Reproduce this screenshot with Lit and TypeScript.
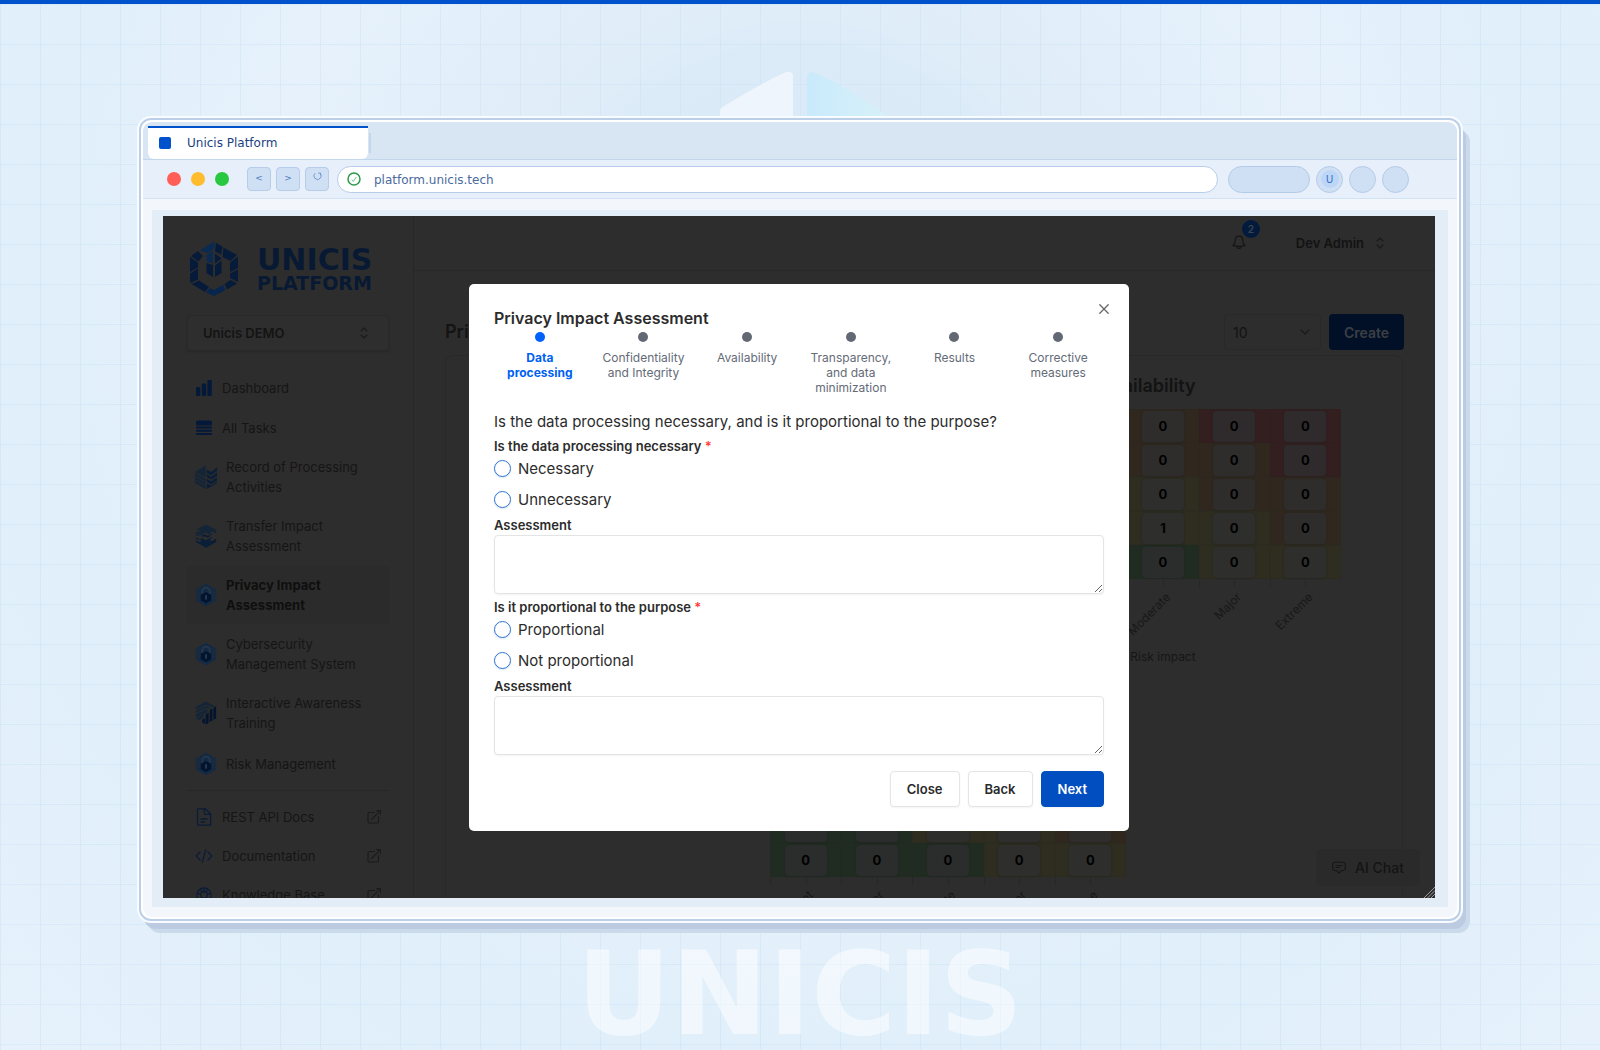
import { LitElement, html, svg, css, nothing } from "lit";
import { customElement, property } from "lit/decorators.js";
import { classMap } from "lit/directives/class-map.js";

type IconName =
  | "bars" | "stack" | "record" | "transfer" | "lock" | "training"
  | "doc" | "code" | "globe" | "external" | "updown" | "down" | "bell" | "chat" | "close" | "reload" | "check";

const icons: Record<IconName, { box: string; body: unknown }> = {
  bars: {
    box: "0 0 16 16",
    body: svg`<g fill="#04193a"><rect y="7" width="4.4" height="9" rx="1.2"/><rect x="5.8" y="3.5" width="4.4" height="12.5" rx="1.2"/><rect x="11.4" width="4.4" height="16" rx="1.2"/></g>`,
  },
  stack: {
    box: "0 0 16 16",
    body: svg`<g fill="#04193a"><rect y=".5" width="16" height="5" rx="1.6"/><rect y="6.5" width="16" height="2" rx=".8"/><rect y="9.8" width="16" height="2" rx=".8"/><rect y="13.1" width="16" height="2" rx=".8"/></g>`,
  },
  record: {
    box: "0 0 24 26",
    body: svg`<g fill="#132537"><path d="M0 8.600l11.600 6.200v3L0 11.400z"/><path d="M0 12.400l11.600 6.200v3L0 15.400z"/><path d="M0 16.400l11.600 6.200V26L0 19.600z"/><path d="M0 7.600L11.600.6v13z"/></g><g fill="#0a1e37"><path d="M12.800 5l5 2.600L24 2.500v4l-6.400 4.500-4.800-2.400z"/><path d="M12.800 10l5 2.600L24 8v3.800l-6.200 4-5-2.400z"/><path d="M12.800 15l5 2.600L24 13.200v3.800l-6.200 3.800-5-2.400z"/><path d="M12.800 20l5 2.200 6-3.800v1.400L12.800 26z"/></g>`,
  },
  transfer: {
    box: "0 0 24 26",
    body: svg`<g fill="#132537"><path d="M1 6.600L12 .6l11 6v3.600l-4-2.200-2.600 1.400 2.800 1.600-2.200 1.200-5-3-5.500 3.200L1 12.600V9.600l5.600-3z"/></g><path d="M8 13.600q2-2 4-.6t4-.6" fill="none" stroke="#04193a" stroke-width="1.4"/><g fill="#0a1e37"><path d="M1 14.400l4.600 2.400 2.200-1.400 4 2.400 5-3L19.400 14l-3.600 3.200 2.200 1.600 5-3.200v3.800l-11 6.200-11-6.200v-1.600l4.400 1.600 2-1.400L1 16z"/></g>`,
  },
  lock: {
    box: "0 0 24 26",
    body: svg`<path d="M12 .8L23 7v12l-11 6.200L1 19V7z" fill="#132a44"/><g stroke="#2a2d31" stroke-width=".8"><path d="M1 9.600l5 2M1 13l4.500 1M1 16.500l5-.6M23 9.600l-5 2M23 13l-4.500 1M23 16.500l-5-.6M3 6l5 3M21 6l-5 3"/></g><path d="M8 12.500V9a4 4 0 0 1 8 0v3.500" fill="none" stroke="#293848" stroke-width="1.800"/><path d="M12 9.800l5.600 3v6L12 22l-5.600-3.200v-6z" fill="#03142f"/><path d="M12 13.800v3.600" stroke="#2d3d50" stroke-width="1.800" stroke-linecap="round"/>`,
  },
  training: {
    box: "0 0 24 26",
    body: svg`<g fill="#132537"><path d="M1 6.600L12 .6l9 4.800-2.400 1.400L12 3.800 1 9.800z"/><path d="M1 10.800l11-6 4.800 2.600-2 1.200-2.800-1.400-11 6z"/><path d="M1 14.600l11-6 1.600.8v3L1 18z"/><path d="M1 19l8.400-4.400v3.200l-5 2.800z"/></g><g fill="#03142f"><path d="M20 7.400l3-1.600v13l-3 1.800z"/><path d="M16 9.600l3-1.600v13.200l-3 1.600z"/><path d="M11.600 14.600l3.200-1.800v11L11.600 25.600z"/><path d="M8 20.400l2.800-1.600V25L8 23.400z"/></g>`,
  },
  doc: {
    box: "0 0 16 18",
    body: svg`<g fill="none" stroke="#0a1c38" stroke-width="1.300" stroke-linejoin="round" stroke-linecap="round"><path d="M2 .8h7.400L14.600 6v11.200H2.500q-1 0-1-1V1.800q0-1 .9-1z"/><path d="M8.400.8v4.500q0 1 1 1h5"/><path d="M5 11h6M5 14h3.500"/></g>`,
  },
  code: {
    box: "1 1 18 14",
    body: svg`<g fill="none" stroke="#0a1c38" stroke-width="1.400" stroke-linejoin="round" stroke-linecap="round"><path d="M5.600 3.500L1.200 8l4.400 4.500M14.400 3.500L18.800 8l-4.400 4.500M11.800 1L8.200 15"/></g>`,
  },
  globe: {
    box: "0 0 18 18",
    body: svg`<g fill="none" stroke="#0a1c38" stroke-width="1.300"><circle cx="9" cy="9" r="8"/><circle cx="9" cy="9" r="3.800"/><path d="M5 1.900l1.600 4M13 1.900l-1.600 4M1.200 7l4.200 1M16.800 7l-4.200 1M9 1v4.200"/></g>`,
  },
  external: {
    box: "0 0 14 14",
    body: svg`<g fill="none" stroke="#1b1b1b" stroke-width="1.100" stroke-linejoin="round" stroke-linecap="round"><path d="M7.500 2.500h-5q-1.500 0-1.500 1.500v7.500Q1 13 2.500 13H10q1.500 0 1.500-1.500v-5"/><path d="M4.500 9.500l8.800-8.800M9.500.6h3.900v3.900"/></g>`,
  },
  updown: {
    box: "0 0 8 12",
    body: svg`<path d="M1 4l3-3 3 3M1 8l3 3 3-3" fill="none" stroke="#1a1a1a" stroke-width="1.100" stroke-linecap="round" stroke-linejoin="round"/>`,
  },
  down: {
    box: "0 0 10 6",
    body: svg`<path d="M1 1l4 4 4-4" fill="none" stroke="#1a1a1a" stroke-width="1.200" stroke-linecap="round" stroke-linejoin="round"/>`,
  },
  bell: {
    box: "0 0 14 15",
    body: svg`<g fill="none" stroke="#161616" stroke-width="1.200" stroke-linejoin="round"><path d="M7 1.200q-3.800 0-3.800 4.300 0 3.500-2.200 5.100 6 1.600 12 0-2.200-1.600-2.200-5.100Q10.800 1.200 7 1.200z"/><path d="M5.200 11.400q0 2 1.800 2t1.800-2"/></g>`,
  },
  chat: {
    box: "0 0 14 14",
    body: svg`<g fill="none" stroke="#161616" stroke-width="1.100" stroke-linejoin="round" stroke-linecap="round"><path d="M2 1.500q5-.9 10 0 1.300.2 1.300 1.500v4.800q0 1.200-1.300 1.500-1 .2-2.600.3L7 12.200 4.600 9.600Q3 9.500 2 9.300.7 9 .7 7.800V3q0-1.300 1.300-1.500z"/><path d="M4 4.500h6M4 6.500h3.500"/></g>`,
  },
  close: {
    box: "0 0 10 10",
    body: svg`<path d="M.8.8l8.400 8.400M9.200.8L.8 9.200" stroke="#666" stroke-width="1.300" stroke-linecap="round"/>`,
  },
  reload: {
    box: "0 0 10 10",
    body: svg`<path d="M2.200 1.500A4 4 0 1 0 8 1.600M5.800 1.200h2.600v2.400" fill="none" stroke="#5f8cc9" stroke-width=".9"/>`,
  },
  check: {
    box: "0 0 14 14",
    body: svg`<circle cx="7" cy="7" r="6" fill="none" stroke="#2a9a48" stroke-width="1.500"/><path d="M4.800 7.600l1.500 1.800 3-4.400" fill="none" stroke="#6abf80" stroke-width=".9"/>`,
  },
};

@customElement("ui-icon")
class UiIcon extends LitElement {
  @property() name: IconName = "bars";
  static styles = css`
    :host { display: inline-flex; flex: none; width: 16px; height: 16px; }
    svg { width: 100%; height: 100%; display: block; overflow: visible; }
  `;
  render() {
    const icon = icons[this.name];
    return html`<svg viewBox=${icon.box} aria-hidden="true">${icon.body}</svg>`;
  }
}

@customElement("page-backdrop")
class PageBackdrop extends LitElement {
  static styles = css`
    :host {
      position: absolute; inset: 0; overflow: hidden;
      background:
        repeating-linear-gradient(90deg, rgba(170, 208, 240, 0.2) 0 1px, transparent 1px 40px),
        repeating-linear-gradient(180deg, rgba(170, 208, 240, 0.2) 0 1px, transparent 1px 40px),
        radial-gradient(circle at 50% 28%, #dceaf7 0, #dfedf8 25%, #e6f1fb 50%, #e0effa 70%, #e6f1fb 100%);
    }
    .art { position: absolute; left: 50%; top: 0; width: 560px; height: 280px; margin-left: -280px; }
    .word {
      position: absolute; left: 0; right: 0; bottom: -14px; text-align: center;
      font: 700 116px/140px "DejaVu Sans", sans-serif; color: rgba(255, 255, 255, 0.52);
    }
  `;
  render() {
    return html`
      <svg class="art" viewBox="0 0 560 280" aria-hidden="true">
        <defs>
          <linearGradient id="fade"><stop offset="0" stop-color="#c9eafc"/><stop offset="1" stop-color="#d8f1f8"/></linearGradient>
        </defs>
        <circle cx="280" cy="285" r="268" fill="#d6e8f7" fill-opacity=".14"/>
        <circle cx="280" cy="285" r="248" fill="#d3e7f8" fill-opacity=".14"/>
        <path d="M201 104Q240 80 264 69Q273 65 273 73V130H206Q197 108 201 104z" fill="#eef5fc"/>
        <path d="M287 74Q287 66 295 69Q330 84 375 118V130H287z" fill="url(#fade)"/>
      </svg>
      <div class="word">UNICIS</div>
    `;
  }
}

@customElement("browser-frame")
class BrowserFrame extends LitElement {
  static styles = css`
    :host {
      position: relative; box-sizing: border-box; flex: 1; min-height: 0; display: flex; flex-direction: column;
      border: 2px solid #bccfe9; border-radius: 12px; padding: 2px; background: #fff;
      font-family: "DejaVu Sans", sans-serif; font-size: 12px;
      box-shadow: 0 0 0 2px #f8fbff, 5px 8px 0 #bccbe1, 9px 12px 0 #cbdaea;
    }
    .tabs {
      height: 38px; box-sizing: border-box; padding: 4px 5px 0; display: flex; gap: 1px;
      background: #d8e5f2; border-bottom: 1px solid #c3d6ec; border-radius: 9px 9px 0 0;
    }
    .tab {
      width: 220px; height: 33px; box-sizing: border-box; display: flex; align-items: center; gap: 16px; padding: 0 0 2px 11px;
      border: 0; border-top: 2px solid #0052cc; border-radius: 0 0 6px 6px; background: #fff;
      font: inherit; color: #21417f; text-align: left;
    }
    .fav { width: 12px; height: 12px; border-radius: 2px; background: #0052cc; }
    .sep { width: 2px; height: 20px; margin-top: 7px; background: #c3d6ec; }
    .bar {
      height: 39px; box-sizing: border-box; display: flex; align-items: center; padding: 0 48px 0 24px;
      background: #e7f0fa; border-bottom: 1px solid #d0e2f4;
    }
    .dots { display: flex; gap: 10px; margin-right: 18px; }
    .dot { width: 14px; height: 14px; border-radius: 50%; }
    .red { background: #ff5f57; }
    .amber { background: #febc2e; }
    .green { background: #28c840; }
    .nav { display: flex; gap: 5px; margin-right: 8px; }
    .key {
      width: 24px; height: 24px; box-sizing: border-box; padding: 0 0 2px; border: 1px solid #b6cce8; border-radius: 4px;
      background: #cfdff4; color: #4c7cc0; font: 9px/12px "DejaVu Sans", sans-serif; display: flex; align-items: center; justify-content: center;
    }
    .key ui-icon { width: 9px; height: 9px; margin-bottom: 3px; }
    .url {
      flex: 1; height: 27px; box-sizing: border-box; display: flex; align-items: center; gap: 13px; padding: 0 9px;
      border: 1px solid #b6cce8; border-radius: 14px; background: #fff; margin-right: 10px;
    }
    .url ui-icon { width: 14px; height: 14px; }
    .url input { flex: 1; border: 0; padding: 2px 0 0; background: none; outline: 0; font: inherit; color: #4a6a9e; }
    .tools { display: flex; gap: 6px; }
    .tool {
      width: 27px; height: 27px; box-sizing: border-box; padding: 0; border: 1px solid #b4cbe8; border-radius: 14px;
      background: #cfdff4; display: flex; align-items: center; justify-content: center;
    }
    .wide { width: 82px; }
    .me { width: 18px; height: 18px; border-radius: 50%; background: #bdd6f5; color: #2c6fd2; font-size: 10px; line-height: 19px; text-align: center; }
    .body { flex: 1; min-height: 0; display: flex; padding: 11px 9px 10px; background: #f3f7fc; border-radius: 0 0 9px 9px; }
    .stage { flex: 1; min-width: 0; display: flex; padding: 6px 13px 9px 11px; background: #e2edf7; }
  `;
  render() {
    return html`
      <div class="tabs">
        <button class="tab"><span class="fav"></span>Unicis Platform</button>
        <span class="sep"></span>
      </div>
      <div class="bar">
        <div class="dots"><span class="dot red"></span><span class="dot amber"></span><span class="dot green"></span></div>
        <div class="nav">
          <button class="key">&lt;</button>
          <button class="key">&gt;</button>
          <button class="key" aria-label="Reload"><ui-icon name="reload"></ui-icon></button>
        </div>
        <div class="url"><ui-icon name="check"></ui-icon><input aria-label="Address" .value=${"platform.unicis.tech"} /></div>
        <div class="tools">
          <button class="tool wide" aria-label="Extensions"></button>
          <button class="tool"><span class="me">U</span></button>
          <button class="tool" aria-label="Downloads"></button>
          <button class="tool" aria-label="Menu"></button>
        </div>
      </div>
      <div class="body"><div class="stage"><slot></slot></div></div>
    `;
  }
}

interface NavItem { label: string; icon: IconName; module?: boolean; active?: boolean; external?: boolean }

const modules: NavItem[] = [
  { label: "Dashboard", icon: "bars" },
  { label: "All Tasks", icon: "stack" },
  { label: "Record of Processing Activities", icon: "record", module: true },
  { label: "Transfer Impact Assessment", icon: "transfer", module: true },
  { label: "Privacy Impact Assessment", icon: "lock", module: true, active: true },
  { label: "Cybersecurity Management System", icon: "lock", module: true },
  { label: "Interactive Awareness Training", icon: "training", module: true },
  { label: "Risk Management", icon: "lock", module: true },
];

const resources: NavItem[] = [
  { label: "REST API Docs", icon: "doc", external: true },
  { label: "Documentation", icon: "code", external: true },
  { label: "Knowledge Base", icon: "globe", external: true },
];

@customElement("side-bar")
class SideBar extends LitElement {
  static styles = css`
    :host {
      flex: none; width: 251px; box-sizing: border-box; display: block; padding: 26px 24px 0 24px; border-right: 1px solid #272727;
      color: #151515; font-size: 13px; line-height: 20px;
    }
    .brand { display: flex; align-items: center; gap: 19px; height: 54px; padding-left: 3px; }
    .mark { width: 48px; height: 54px; flex: none; }
    .name { display: flex; flex-direction: column; color: #081a33; font-family: "DejaVu Sans", sans-serif; font-weight: 700; }
    .top { font-size: 30px; line-height: 28px; }
    .sub { font-size: 19px; line-height: 18px; }
    .team {
      width: 100%; height: 36px; box-sizing: border-box; margin: 19px 0 17px; padding: 0 20px 0 15px; display: flex; align-items: center;
      justify-content: space-between; border: 1px solid #292929; border-radius: 4px; background: #2e2e2e; color: #141414; font: inherit; font-weight: 600;
      box-shadow: 0 1px 2px #282828;
    }
    .team ui-icon { width: 8px; height: 12px; }
    nav { display: flex; flex-direction: column; gap: 1px; }
    .links { display: flex; flex-direction: column; }
    a {
      min-height: 39px; box-sizing: border-box; padding: 9px 8px 9px 9px; display: flex; align-items: center; gap: 10px;
      color: inherit; text-decoration: none; border-radius: 2px;
    }
    a.module { padding-left: 7px; gap: 8px; }
    a.module .icon { width: 24px; height: 24px; }
    a.active { background: #2b2b2b; color: #0f0f0f; font-weight: 700; }
    .label { flex: 1; }
    .icon { height: 18px; }
    .out { width: 14px; height: 14px; }
    hr { width: 100%; margin: 4px 0 5px; border: 0; border-top: 1px solid #272727; }
  `;
  private item(i: NavItem) {
    return html`<a href="#" class=${classMap({ module: !!i.module, active: !!i.active })}>
      <ui-icon class="icon" name=${i.icon}></ui-icon>
      <span class="label">${i.label}</span>
      ${i.external ? html`<ui-icon class="out" name="external"></ui-icon>` : nothing}
    </a>`;
  }
  render() {
    return html`
      <div class="brand">
        <svg class="mark" viewBox="0 0 48 54" aria-hidden="true">
          <g fill="#061b3a">
            <path d="M0 15l8 5.500v5L0 30z"/><path d="M0 31.500l8-5v11L0 41z"/><path d="M1.500 42l7.500-3.500 10 6.500-4 5z"/>
            <path d="M20 46l4 2 9-5 2.500 5-11.500 6-8-3.500z" fill="#08264d"/><path d="M34.500 42l6-4 6.500 3.500-10 6z"/>
            <path d="M40 20.500l8-6V26l-8 4z"/><path d="M40 31.500l8-4V40l-8-4z"/>
            <path d="M1 14l7-5 5 5-4.500 5.500z"/><path d="M33.500 5.500L47 13l-6.500 6-8-4z"/>
            <path d="M10 8.500L23 0l2 1-1 6-6 4z" fill="#0a2a52"/><path d="M26 1l6.500 3.500-1.500 8-6-3z"/>
            <path d="M16.500 13l6.500-4v12.500l-6.500-2z" fill="#0a2a52"/><path d="M16.500 21l6.500 2v12l-6.500-4z"/>
            <path d="M25 11.500l6.500 5L25 21.500z"/><path d="M25 23.500l6.500-5V31L25 35z"/>
          </g>
        </svg>
        <div class="name"><span class="top">UNICIS</span><span class="sub">PLATFORM</span></div>
      </div>
      <button class="team">Unicis DEMO<ui-icon name="updown"></ui-icon></button>
      <nav>
        ${modules.map((i) => this.item(i))}
        <hr />
        <div class="links">${resources.map((i) => this.item(i))}</div>
      </nav>
    `;
  }
}

type Level = "low" | "mid" | "high" | "top";
const levels: Level[][] = [
  ["mid", "high", "high", "top", "top"],
  ["mid", "mid", "high", "high", "top"],
  ["low", "mid", "mid", "high", "high"],
  ["low", "low", "mid", "mid", "high"],
  ["low", "low", "low", "mid", "mid"],
];
const impacts = ["Insignificant", "Minor", "Moderate", "Major", "Extreme"];

@customElement("risk-matrix")
class RiskMatrix extends LitElement {
  @property() heading = "";
  @property({ attribute: false }) counts: number[][] = [];
  static styles = css`
    :host { display: flex; flex-direction: column; align-items: center; color: #131313; }
    h2 { margin: 0 0 9px 18px; font-size: 18px; line-height: 28px; font-weight: 600; }
    .chart { width: 356px; margin-left: 48px; }
    table { width: 100%; border-collapse: collapse; table-layout: fixed; }
    td { height: 34px; padding: 0; box-shadow: inset 0 0 0 1px rgba(36, 36, 36, 0.15); }
    .low { background: #202c22; }
    .mid { background: #2e2d20; }
    .high { background: #30281f; }
    .top { background: #341f20; }
    .count {
      width: 42px; height: 31px; margin: 0 auto; border-radius: 4px; background: rgba(46, 46, 48, 0.8); color: #000;
      font-size: 13px; line-height: 31px; font-weight: 700; text-align: center; box-shadow: 0 0 2px #222;
    }
    .axis {
      height: 70px; display: grid; grid-template-columns: repeat(5, 1fr);
      background: repeating-linear-gradient(90deg, #272727 0 1px, transparent 1px 10%) 0 0 / 100% 8px no-repeat;
    }
    .tick { display: flex; justify-content: flex-end; align-items: flex-start; margin-right: 50%; padding-top: 11px; }
    .tick span { transform: rotate(-45deg); transform-origin: right top; white-space: nowrap; font-size: 12px; line-height: 14px; color: #181818; }
    .title { margin: 0 0 5px; font-size: 12px; line-height: 16px; text-align: center; color: #161616; }
  `;
  render() {
    return html`
      <h2>${this.heading}</h2>
      <div class="chart">
        <table aria-label=${this.heading}>
          ${this.counts.map((row, r) => html`<tr>${row.map((n, c) => html`<td class=${levels[r][c]}><div class="count">${n}</div></td>`)}</tr>`)}
        </table>
        <div class="axis">${impacts.map((i) => html`<div class="tick"><span>${i}</span></div>`)}</div>
        <p class="title">Risk impact</p>
      </div>
    `;
  }
}

const zeros = () => levels.map((row) => row.map(() => 0));
const availability = zeros();
availability[3][2] = 1;
const overall = zeros();

@customElement("main-panel")
class MainPanel extends LitElement {
  static styles = css`
    :host { flex: 1; min-width: 0; display: flex; flex-direction: column; color: #131313; font-size: 13px; }
    header { height: 55px; flex: none; box-sizing: border-box; display: flex; align-items: center; justify-content: flex-end; gap: 50px; padding: 0 51px 1px 0; border-bottom: 1px solid #272727; }
    button, select { font: inherit; color: inherit; }
    .alerts { position: relative; padding: 0; border: 0; background: none; width: 14px; height: 15px; }
    .alerts ui-icon { width: 14px; height: 15px; }
    .badge { position: absolute; left: 10px; top: -15px; width: 18px; height: 18px; border-radius: 50%; background: #021a3c; color: #3f444b; font-size: 10px; line-height: 18px; font-weight: 600; text-align: center; }
    .user { display: flex; align-items: center; gap: 12px; padding: 0; border: 0; background: none; font-weight: 600; }
    .user ui-icon { width: 8px; height: 12px; }
    .head { display: flex; align-items: center; padding: 43px 31px 5px 31px; gap: 8px; }
    h1 { margin: 0; flex: 1; font-size: 18px; line-height: 28px; font-weight: 600; }
    .size { position: relative; width: 97px; display: flex; }
    select { width: 100%; height: 36px; padding: 0 8px; appearance: none; border: 1px solid #292929; border-radius: 4px; background: #2d2d2d; font-size: 14px; }
    .size ui-icon { position: absolute; right: 11px; top: 15px; width: 10px; height: 6px; pointer-events: none; }
    .create { width: 75px; height: 36px; border: 0; border-radius: 4px; background: #011026; color: #3b3f44; font-weight: 600; font-size: 14px; }
    .card { margin: 0 32px 0 31px; padding: 16px 48px; border: 1px solid #292929; border-radius: 8px; display: grid; grid-template-columns: 1fr 1fr; }
    .right { grid-column: 2; }
    .center { grid-column: 1 / 3; }
  `;
  render() {
    return html`
      <header>
        <button class="alerts" aria-label="Notifications"><ui-icon name="bell"></ui-icon><span class="badge">2</span></button>
        <button class="user">Dev Admin <ui-icon name="updown"></ui-icon></button>
      </header>
      <div class="head">
        <h1>Privacy Impact Assessment</h1>
        <div class="size"><select aria-label="Rows per page"><option>10</option></select><ui-icon name="down"></ui-icon></div>
        <button class="create">Create</button>
      </div>
      <section class="card">
        <risk-matrix class="right" heading="Availability" .counts=${availability}></risk-matrix>
        <risk-matrix class="center" heading="Transparency" .counts=${overall}></risk-matrix>
      </section>
    `;
  }
}

const steps = ["Data processing", "Confidentiality and Integrity", "Availability", "Transparency, and data minimization", "Results", "Corrective measures"];
const questions = [
  { id: "necessary", label: "Is the data processing necessary", options: ["Necessary", "Unnecessary"] },
  { id: "proportional", label: "Is it proportional to the purpose", options: ["Proportional", "Not proportional"] },
];

@customElement("assessment-dialog")
class AssessmentDialog extends LitElement {
  static styles = css`
    :host {
      position: relative; display: block; box-sizing: border-box; width: 660px; max-width: 90%; padding: 24px 25px; border-radius: 5px; background: #fff;
      color: #2c2c2c; font-size: 15px; line-height: 24px;
    }
    h2 { margin: 0; font-size: 16px; line-height: 20px; font-weight: 600; }
    .x { position: absolute; right: 20px; top: 20px; width: 10px; height: 10px; padding: 0; border: 0; background: none; display: flex; }
    .x ui-icon { width: 10px; height: 10px; }
    ol { margin: 4px -6px 15px; padding: 0; list-style: none; display: grid; grid-template-columns: repeat(6, 1fr); }
    li { display: flex; flex-direction: column; align-items: center; gap: 8px; padding: 0 8px; text-align: center; font-size: 12px; line-height: 15px; color: #646b78; }
    li::before { content: ""; width: 10px; height: 10px; border-radius: 50%; background: #626975; }
    li.on { color: #0061f2; font-weight: 700; }
    li.on::before { background: #0061fe; }
    .ask { margin: 0 0 2px; }
    fieldset { margin: 0; padding: 0; border: 0; display: flex; flex-direction: column; gap: 7px; }
    legend, .note { display: block; padding: 0; font-size: 13px; line-height: 20px; font-weight: 600; }
    legend { margin-bottom: 1px; }
    .req { color: #ff3b3b; }
    .option { display: flex; align-items: center; gap: 7px; }
    .option input { appearance: none; width: 17px; height: 17px; box-sizing: border-box; margin: 0; border: 1px solid #2f74d0; border-radius: 50%; background: #fff; box-shadow: 0 1px 2px rgba(47, 116, 208, 0.2); }
    .note { margin-top: 3px; }
    textarea { display: block; width: 100%; height: 59px; box-sizing: border-box; margin: 0 0 3px; border: 1px solid #e3e4e6; border-radius: 4px; padding: 8px; font: inherit; resize: vertical; box-shadow: 0 1px 2px rgba(0, 0, 0, 0.05); }
    .actions { display: flex; justify-content: flex-end; gap: 8px; margin-top: 16px; }
    .actions button { height: 36px; padding: 0 16px; border: 1px solid #e3e5e9; border-radius: 4px; background: #fff; color: #2a2a2a; font: 600 13px/20px Inter, sans-serif; box-shadow: 0 1px 2px rgba(0, 0, 0, 0.05); }
    .actions .primary { background: #004ec0; border-color: #004ec0; color: #fff; }
  `;
  render() {
    return html`
      <button class="x" aria-label="Dismiss"><ui-icon name="close"></ui-icon></button>
      <h2>Privacy Impact Assessment</h2>
      <ol>${steps.map((s, i) => html`<li class=${classMap({ on: i === 0 })}>${s}</li>`)}</ol>
      <p class="ask">Is the data processing necessary, and is it proportional to the purpose?</p>
      ${questions.map((q) => html`
        <fieldset>
          <legend>${q.label} <span class="req">*</span></legend>
          ${q.options.map((o) => html`<label class="option"><input type="radio" name=${q.id} />${o}</label>`)}
        </fieldset>
        <label class="note" for=${q.id}>Assessment</label>
        <textarea id=${q.id}></textarea>
      `)}
      <div class="actions">
        <button>Close</button>
        <button>Back</button>
        <button class="primary">Next</button>
      </div>
    `;
  }
}

@customElement("app-root")
class AppRoot extends LitElement {
  static styles = css`
    :host {
      position: relative; display: flex; flex-direction: column; box-sizing: border-box; height: 100vh; overflow: hidden;
      padding: 114px 139px 129px; border-top: 4px solid #0052cc; font-family: Inter, sans-serif;
    }
    .screen { position: relative; flex: 1; min-width: 0; display: flex; overflow: hidden; background: #2d2d2d; font-family: Inter, sans-serif; }
    .overlay { position: absolute; inset: 0; display: flex; align-items: center; justify-content: center; }
    .chat {
      position: absolute; right: 15px; bottom: 12px; height: 37px; padding: 0 16px; display: flex; align-items: center; gap: 9px;
      border: 0; border-radius: 5px; background: #2a2a2a; color: #141414; font: 500 14px/20px Inter, sans-serif;
    }
    .chat ui-icon { width: 14px; height: 14px; }
    .grip { position: absolute; right: 0; bottom: 0; width: 12px; height: 12px; }
  `;
  render() {
    return html`
      <page-backdrop></page-backdrop>
      <browser-frame>
        <div class="screen">
          <side-bar></side-bar>
          <main-panel></main-panel>
          <button class="chat"><ui-icon name="chat"></ui-icon>AI Chat</button>
          <div class="overlay"><assessment-dialog></assessment-dialog></div>
          <svg class="grip" viewBox="0 0 12 12" aria-hidden="true"><path d="M1 12L12 1M4.500 12L12 4.500M8 12l4-4" stroke="#9a9a9a" stroke-width="1"/></svg>
        </div>
      </browser-frame>
    `;
  }
}
